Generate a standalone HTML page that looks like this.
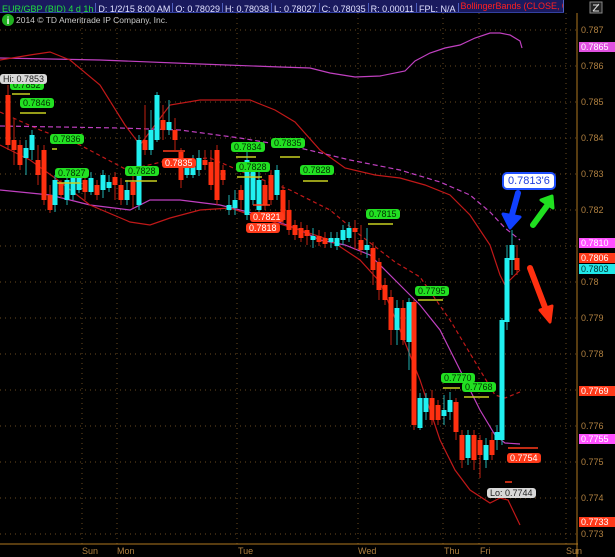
<!DOCTYPE html>
<html><head><meta charset="utf-8">
<style>
body{margin:0;background:#000;width:615px;height:557px;overflow:hidden;position:relative;font-family:"Liberation Sans",sans-serif}
#top{position:absolute;left:0;top:0;height:12px;background:#1a1a5e;border-bottom:1px solid #3340a0;font-size:9px;line-height:12px;white-space:nowrap;overflow:hidden}
#top span{display:inline-block;padding:0 2px;border-right:1px solid #5060c0;color:#e0e0ff}
.lb{position:absolute;font-size:9px;line-height:10px;padding:0 3px;border-radius:3px;white-space:nowrap}
.g{background:#22e022;color:#003000}
.r{background:#ff3a1a;color:#fff}
.w{background:#d8d8d8;color:#222}
.ax{position:absolute;left:581px;font-size:9px;color:#b08040}
.ap{position:absolute;left:579px;width:36px;font-size:9px;line-height:10px;padding-left:2px}
.dl{position:absolute;top:546px;font-size:9px;color:#b08040}
</style></head><body>
<svg id="s" width="615" height="557" style="position:absolute;left:0;top:0">
<g stroke="#6a4a20" stroke-width="1" stroke-dasharray="1,4" fill="none">
<line x1="0" x2="578" y1="30" y2="30"/><line x1="0" x2="578" y1="66" y2="66"/><line x1="0" x2="578" y1="102" y2="102"/><line x1="0" x2="578" y1="138" y2="138"/><line x1="0" x2="578" y1="174" y2="174"/><line x1="0" x2="578" y1="210" y2="210"/><line x1="0" x2="578" y1="246" y2="246"/><line x1="0" x2="578" y1="282" y2="282"/><line x1="0" x2="578" y1="318" y2="318"/><line x1="0" x2="578" y1="354" y2="354"/><line x1="0" x2="578" y1="390" y2="390"/><line x1="0" x2="578" y1="426" y2="426"/><line x1="0" x2="578" y1="462" y2="462"/><line x1="0" x2="578" y1="498" y2="498"/><line x1="0" x2="578" y1="534" y2="534"/>
<line x1="82" x2="82" y1="13" y2="544"/><line x1="117" x2="117" y1="13" y2="544"/><line x1="237" x2="237" y1="13" y2="544"/><line x1="358" x2="358" y1="13" y2="544"/><line x1="443" x2="443" y1="13" y2="544"/><line x1="479" x2="479" y1="13" y2="544"/><line x1="566" x2="566" y1="13" y2="544"/>
</g>
<line x1="0" x2="578" y1="544" y2="544" stroke="#b07820"/>
<line x1="577" x2="577" y1="13" y2="557" stroke="#b07820"/>
<g fill="none" stroke-width="1.2">
<polyline stroke="#c040c0" points="0,58 100,60 200,64 280,67 310,68 330,73 355,77 380,76 405,71 415,61 430,53 445,48 460,45 475,38 490,33 500,33 510,35 520,41 522,48"/>
<polyline stroke="#c01818" points="0,60 30,55 50,52 70,60 100,85 125,125 140,145 155,125 170,105 200,100 250,100 275,110 295,122 320,150 345,168 375,175 400,178 425,185 450,195 470,215 490,245 500,275 505,285 512,278 520,270"/>
<polyline stroke="#c01818" stroke-dasharray="4,3" points="0,112 40,130 80,145 127,170 170,160 210,158 250,175 290,190 330,210 360,235 395,262 420,277 450,320 480,370 495,395 505,398 520,392"/>
<polyline stroke="#c040c0" stroke-dasharray="5,3" points="0,126 60,127 120,128 180,130 240,138 300,148 350,160 400,170 440,182 470,195 490,212 505,228 520,240"/>
<polyline stroke="#c040c0" points="0,190 50,195 90,205 130,210 150,200 180,200 220,205 260,215 300,230 320,240 345,245 370,255 400,285 420,305 440,330 460,370 480,410 495,435 505,443 520,444"/>
<polyline stroke="#c01818" points="0,145 30,160 55,178 90,205 130,222 150,225 170,218 200,210 230,208 260,218 300,230 330,240 360,260 380,282 400,330 420,380 440,440 455,470 470,490 490,503 500,498 508,500 520,525"/>
</g>
<g id="c"></g>
<g stroke="#c8d020" stroke-width="1.5">
<line x1="12" x2="30" y1="94" y2="94"/><line x1="20" x2="46" y1="113" y2="113"/><line x1="52" x2="57" y1="149" y2="149"/><line x1="57" x2="80" y1="183" y2="183"/><line x1="125" x2="157" y1="181" y2="181"/><line x1="236" x2="256" y1="157" y2="157"/><line x1="237" x2="262" y1="177" y2="177"/><line x1="280" x2="300" y1="157" y2="157"/><line x1="303" x2="328" y1="181" y2="181"/><line x1="368" x2="393" y1="224" y2="224"/><line x1="418" x2="443" y1="300" y2="300"/><line x1="443" x2="460" y1="388" y2="388"/><line x1="464" x2="489" y1="397" y2="397"/>
</g>
<g stroke="#ff3a1a" stroke-width="1.5"><line x1="163" x2="185" y1="151" y2="151"/><line x1="253" x2="270" y1="205" y2="205"/><line x1="508" x2="538" y1="448" y2="448"/><line x1="505" x2="512" y1="482" y2="482"/></g>
<g stroke-linecap="round">
<path d="M518 193 L510 222" stroke="#1040ff" stroke-width="6"/><path d="M503 214 L510 228 L520 217 Z" fill="#1040ff" stroke="#1040ff" stroke-width="3" stroke-linejoin="round"/>
<path d="M533 225 L549 203" stroke="#20e020" stroke-width="6"/><path d="M541 200 L552 196 L553 208 Z" fill="#20e020" stroke="#20e020" stroke-width="3" stroke-linejoin="round"/>
<path d="M530 268 L546 310" stroke="#ff3010" stroke-width="6"/><path d="M540 310 L550 322 L552 306 Z" fill="#ff3010" stroke="#ff3010" stroke-width="3" stroke-linejoin="round"/>
</g>
<circle cx="8" cy="20" r="6" fill="#20b020"/><text x="8" y="24" fill="#fff" font-size="10" font-weight="bold" text-anchor="middle" font-family="Liberation Sans">i</text>
<rect x="590" y="2" width="12" height="11" fill="#222" stroke="#888"/><path d="M593 11 L599 4 M593 5 L599 5 M593 11 L599 11" stroke="#ddd" stroke-width="1"/>
</svg>
<div id="top"><span style="color:#20e040">EUR/GBP (BID) 4 d 1h</span><span>D: 1/2/15 8:00 AM</span><span>O: 0.78029</span><span>H: 0.78038</span><span>L: 0.78027</span><span>C: 0.78035</span><span>R: 0.00011</span><span>FPL: N/A</span><span style="color:#ff2020;width:100px;overflow:hidden">BollingerBands (CLOSE, 0,...</span></div>
<div style="position:absolute;left:16px;top:15px;font-size:8.5px;color:#c8c8c8">2014 © TD Ameritrade IP Company, Inc.</div>
<div class="ax" style="top:25px">0.787</div><div class="ax" style="top:61px">0.786</div><div class="ax" style="top:97px">0.785</div><div class="ax" style="top:133px">0.784</div><div class="ax" style="top:169px">0.783</div><div class="ax" style="top:205px">0.782</div><div class="ax" style="top:277px">0.78</div><div class="ax" style="top:313px">0.779</div><div class="ax" style="top:349px">0.778</div><div class="ax" style="top:421px">0.776</div><div class="ax" style="top:457px">0.775</div><div class="ax" style="top:493px">0.774</div><div class="ax" style="top:529px">0.773</div>
<div class="ap" style="top:42px;background:#e050e0;color:#fff">0.7865</div>
<div class="ap" style="top:238px;background:#ff50ff;color:#fff">0.7810</div>
<div class="ap" style="top:253px;background:#ff3a1a;color:#fff">0.7806</div>
<div class="ap" style="top:264px;background:#20e8e8;color:#003030">0.7803</div>
<div class="ap" style="top:386px;background:#ff3a1a;color:#fff">0.7769</div>
<div class="ap" style="top:434px;background:#ff50ff;color:#fff">0.7755</div>
<div class="ap" style="top:517px;background:#ff3a1a;color:#fff">0.7733</div>
<div class="dl" style="left:82px">Sun</div><div class="dl" style="left:117px">Mon</div><div class="dl" style="left:238px">Tue</div><div class="dl" style="left:358px">Wed</div><div class="dl" style="left:444px">Thu</div><div class="dl" style="left:480px">Fri</div><div class="dl" style="left:566px">Sun</div>
<div class="lb g" style="left:10px;top:80px">0.7852</div>
<div class="lb w" style="left:0;top:74px">Hi: 0.7853</div>
<div class="lb g" style="left:20px;top:98px">0.7846</div>
<div class="lb g" style="left:50px;top:134px">0.7836</div>
<div class="lb g" style="left:55px;top:168px">0.7827</div>
<div class="lb g" style="left:125px;top:166px">0.7828</div>
<div class="lb r" style="left:162px;top:158px">0.7835</div>
<div class="lb g" style="left:231px;top:142px">0.7834</div>
<div class="lb g" style="left:236px;top:162px">0.7828</div>
<div class="lb g" style="left:271px;top:138px">0.7835</div>
<div class="lb g" style="left:300px;top:165px">0.7828</div>
<div class="lb r" style="left:250px;top:212px">0.7821</div>
<div class="lb r" style="left:246px;top:223px">0.7818</div>
<div class="lb g" style="left:366px;top:209px">0.7815</div>
<div class="lb g" style="left:415px;top:286px">0.7795</div>
<div class="lb g" style="left:441px;top:373px">0.7770</div>
<div class="lb g" style="left:462px;top:382px">0.7768</div>
<div class="lb r" style="left:507px;top:453px">0.7754</div>
<div class="lb w" style="left:487px;top:488px">Lo: 0.7744</div>
<div style="position:absolute;left:502px;top:172px;padding:1px 4px;border:2px solid #2050ff;border-radius:5px;background:#fff;color:#2040e0;font-size:11px">0.7813'6</div>
<script>
var d=[
[8,95,145,85,150,'r'],[14,140,150,118,165,'r'],[20,145,165,140,170,'r'],[26,148,158,140,175,'c'],[32,135,150,130,160,'c'],[38,160,175,145,185,'r'],[44,150,200,145,205,'r'],[50,195,210,185,213,'r'],[55,180,205,175,212,'c'],[61,183,195,180,198,'r'],[67,180,200,175,205,'c'],[73,172,195,168,200,'c'],[79,175,190,170,193,'c'],[85,180,192,175,200,'r'],[91,178,192,172,195,'c'],[97,185,195,180,200,'r'],[103,175,190,170,198,'c'],[109,182,188,175,192,'c'],[115,177,185,172,200,'r'],[121,185,200,178,205,'r'],[127,190,200,180,205,'c'],[133,182,195,176,208,'r'],[139,140,205,135,210,'c'],[145,140,150,105,155,'r'],[151,130,150,110,155,'c'],[157,95,140,92,142,'c'],[163,120,130,105,140,'r'],[169,122,130,100,135,'c'],[175,130,140,118,150,'r'],[181,152,180,148,188,'r'],[187,168,175,158,178,'c'],[193,160,175,155,178,'c'],[199,158,170,150,176,'c'],[205,160,165,150,170,'r'],[211,162,185,150,190,'r'],[217,150,200,145,205,'r'],[223,170,180,165,185,'r'],[229,205,210,195,215,'c'],[235,200,208,190,215,'c'],[241,190,200,185,210,'r'],[247,160,215,145,220,'c'],[253,170,200,165,205,'c'],[259,180,210,172,215,'c'],[265,185,205,180,210,'r'],[271,175,200,170,205,'r'],[277,170,195,165,200,'c'],[283,190,220,185,225,'r'],[289,210,230,200,235,'r'],[295,225,235,220,240,'r'],[301,228,238,222,242,'r'],[307,230,236,225,245,'r'],[313,236,240,228,248,'c'],[319,236,242,230,246,'r'],[325,238,244,232,248,'r'],[331,238,242,232,248,'c'],[337,238,246,232,250,'c'],[343,230,240,225,245,'c'],[349,228,238,222,242,'c'],[355,228,232,220,250,'r'],[361,240,250,225,255,'r'],[367,245,250,228,258,'c'],[373,248,270,242,285,'r'],[379,262,290,258,300,'r'],[385,285,300,278,305,'r'],[391,297,330,290,345,'r'],[397,308,330,300,345,'c'],[403,308,340,300,345,'r'],[409,302,342,298,370,'c'],[414,302,425,300,430,'r'],[420,398,428,393,430,'c'],[426,398,412,393,420,'c'],[432,398,420,390,425,'r'],[438,405,420,400,425,'r'],[444,410,416,395,425,'c'],[450,400,412,392,420,'c'],[456,402,432,398,440,'r'],[462,435,460,430,468,'r'],[468,435,458,430,465,'c'],[474,435,460,430,470,'r'],[480,440,455,435,478,'r'],[486,445,460,438,468,'c'],[492,440,455,432,460,'r'],[497,432,440,425,450,'c'],[502,320,440,318,445,'c'],[507,258,322,245,330,'c'],[512,245,260,230,275,'c'],[517,258,270,245,275,'r']];
var s='';d.forEach(function(a){var col=a[5]=='r'?'#ff3010':'#20f0f0';var wc=a[5]=='r'?'#c02010':'#20b0b0';
s+='<line x1="'+a[0]+'" x2="'+a[0]+'" y1="'+a[3]+'" y2="'+a[4]+'" stroke="'+wc+'"/>';
s+='<rect x="'+(a[0]-2.5)+'" y="'+a[1]+'" width="5" height="'+Math.max(1,a[2]-a[1])+'" fill="'+col+'"/>';});
document.getElementById('c').innerHTML=s;
</script>
</body></html>
